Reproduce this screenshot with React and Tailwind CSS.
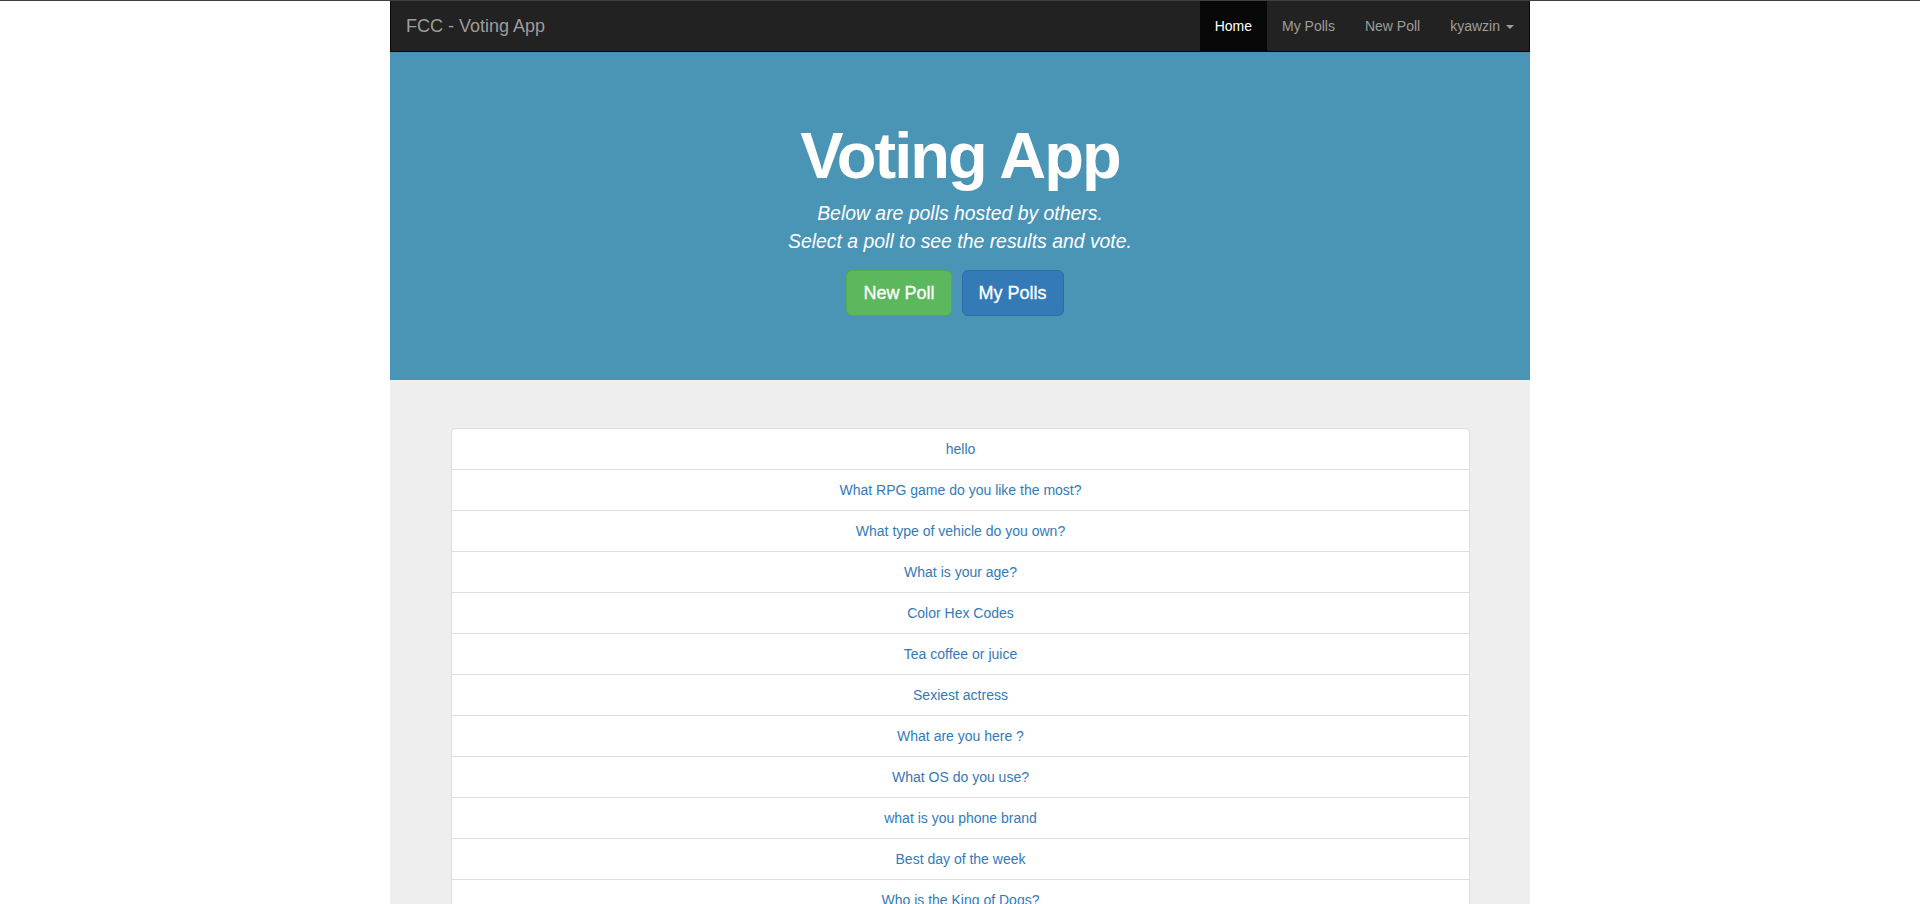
import React from "react";

const polls = [
  "hello",
  "What RPG game do you like the most?",
  "What type of vehicle do you own?",
  "What is your age?",
  "Color Hex Codes",
  "Tea coffee or juice",
  "Sexiest actress",
  "What are you here ?",
  "What OS do you use?",
  "what is you phone brand",
  "Best day of the week",
  "Who is the King of Dogs?",
  "Favorite programming language",
  "Best movie of all time",
];

export default function App() {
  return (
    <div
      className="relative h-[904px] overflow-hidden bg-white"
      style={{ fontFamily: '"Liberation Sans", Arial, Helvetica, sans-serif' }}
    >
      <div className="h-px bg-[#3f3f3f]" />
      <div className="relative mx-auto w-[1140px] min-h-[903px] bg-[#eeeeee]">
        <nav className="flex h-[51px] justify-between border-x border-b border-[#080808] bg-[#222222]">
          <a className="px-[15px] text-[18px] leading-[50px] text-[#9d9d9d]">
            FCC - Voting App
          </a>
          <ul className="flex text-[14px] leading-[50px] text-[#9d9d9d]">
            <li className="ml-[-1px] bg-[#080808] px-[15px] text-white">Home</li>
            <li className="px-[15px]">My Polls</li>
            <li className="px-[15px]">New Poll</li>
            <li className="flex items-center px-[15px]">
              kyawzin
              <span className="ml-[6px] mt-[2px] h-0 w-0 border-x-[4px] border-t-[4px] border-x-transparent border-t-[#9d9d9d]" />
            </li>
          </ul>
        </nav>

        <div className="bg-[#4a94b6] pb-[49px] pt-[49px] text-center text-white">
          <h1 className="mb-[8px] mt-[20px] text-[65px] font-bold leading-[70px] tracking-[-2px]">
            Voting App
          </h1>
          <p className="text-[19.4px] italic leading-[28px]">
            Below are polls hosted by others.
            <br />
            Select a poll to see the results and vote.
          </p>
          <div className="mb-[15px] mt-[15px] flex justify-center gap-[10px] pr-[10px]">
            <button className="h-[46px] rounded-[6px] border border-[#4cae4c] bg-[#5cb85c] px-[16px] text-[18px] leading-[24px] text-white [-webkit-text-stroke:0.3px_white]">
              New Poll
            </button>
            <button className="h-[46px] rounded-[6px] border border-[#2e6da4] bg-[#337ab7] px-[16px] text-[18px] leading-[24px] text-white [-webkit-text-stroke:0.3px_white]">
              My Polls
            </button>
          </div>
        </div>

        <div className="ml-[61px] mr-[60px] pt-[48px]">
          <div className="overflow-hidden rounded-[4px] border border-[#dddddd] bg-white">
            {polls.map((p, i) => (
              <div
                key={i}
                className={
                  "px-[15px] py-[10px] text-center text-[14px] leading-[20px] text-[#337ab7] " +
                  (i === 0 ? "" : "border-t border-[#dddddd]")
                }
              >
                {p}
              </div>
            ))}
          </div>
        </div>

        <div className="pointer-events-none absolute bottom-0 left-0 right-0 h-[70px] bg-gradient-to-b from-transparent via-black/[0.03] to-black/[0.08]" />
      </div>
    </div>
  );
}
